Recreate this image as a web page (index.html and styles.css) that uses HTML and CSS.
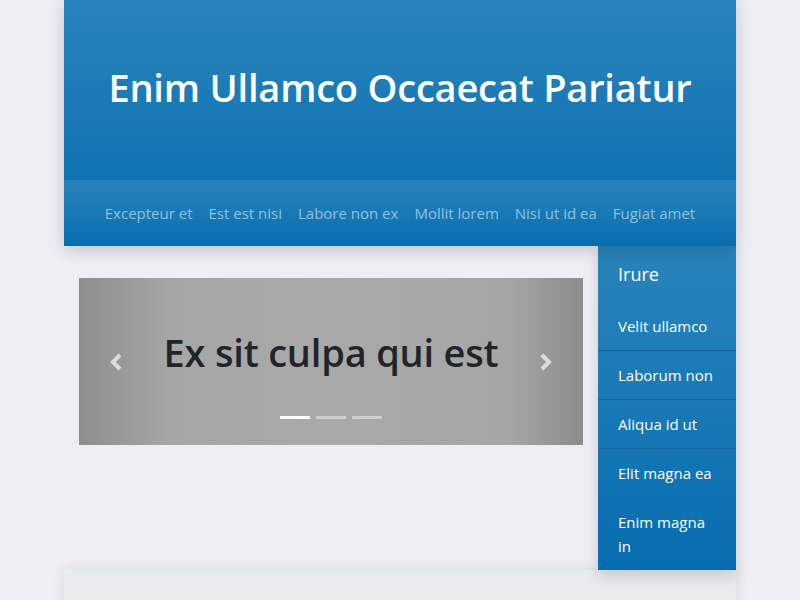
FILE: index.html
```html
<!DOCTYPE html>
<html>
<head>
<meta charset="utf-8">
<link rel="stylesheet" href="styles.css">
</head>
<body>
<div class="page">
  <header class="masthead">
    <div class="hero"><h1 class="title">Enim Ullamco Occaecat Pariatur</h1></div>
    <nav class="nav">
      <a>Excepteur et</a>
      <a>Est est nisi</a>
      <a>Labore non ex</a>
      <a>Mollit lorem</a>
      <a>Nisi ut id ea</a>
      <a>Fugiat amet</a>
    </nav>
  </header>
  <div class="body">
    <main class="main">
      <div class="carousel">
        <span class="ctrl prev"><svg width="16" height="20" viewBox="0 0 16 20"><path d="M11 3 L4 10 L11 17" fill="none" stroke="currentColor" stroke-width="4"/></svg></span>
        <h2 class="slide">Ex sit culpa qui est</h2>
        <span class="ctrl next"><svg width="16" height="20" viewBox="0 0 16 20"><path d="M5 3 L12 10 L5 17" fill="none" stroke="currentColor" stroke-width="4"/></svg></span>
        <div class="dots"><span class="dot on"></span><span class="dot"></span><span class="dot"></span></div>
      </div>
    </main>
    <aside class="side">
      <div class="side-head">Irure</div>
      <a class="side-item">Velit ullamco</a>
      <a class="side-item">Laborum non</a>
      <a class="side-item">Aliqua id ut</a>
      <a class="side-item">Elit magna ea</a>
      <a class="side-item">Enim magna in</a>
    </aside>
  </div>
  <footer class="foot"></footer>
</div>
</body>
</html>
```
FILE: styles.css
```css
html, body { margin: 0; padding: 0; }
body {
  background: #f0eef5;
  font-family: "Open Sans", "Noto Sans", sans-serif;
  overflow: hidden;
  height: 600px;
}
.page { width: 672px; margin: 0 auto; }
.masthead {
  background: linear-gradient(#2a84bb, #066db0);
  box-shadow: 0 4px 16px rgba(0,0,0,0.18);
  position: relative;
  z-index: 2;
}
.hero { height: 180px; display: flex; align-items: center; justify-content: center; }
.title {
  margin: 0 0 6px 0;
  color: #fff;
  font-size: 38px;
  font-weight: 600;
  letter-spacing: -0.2px;
}
.nav {
  height: 66px;
  background: linear-gradient(#2a84bb, #066db0);
  display: flex;
  justify-content: center;
  align-items: center;
  gap: 16px;
}
.nav a { color: #93c0de; font-size: 15px; }
.body { display: flex; align-items: flex-start; }
.main { width: 504px; padding: 32px 15px 0 15px; }
.carousel {
  height: 167px;
  background: linear-gradient(90deg, #8e8e8e 0%, #a6a6a6 18%, #a9a9a9 50%, #a6a6a6 85%, #8c8c8c 100%);
  display: flex;
  align-items: center;
  justify-content: center;
  position: relative;
}
.slide { margin: 0 0 20px 0; font-size: 38px; font-weight: 600; color: #212529; letter-spacing: -0.2px; }
.ctrl { position: absolute; top: 74px; color: #dcdcdc; }
.prev { left: 30px; }
.next { right: 30px; }
.dots { position: absolute; bottom: 26px; left: 0; right: 0; display: flex; justify-content: center; gap: 6px; }
.dot { width: 30px; height: 3px; background: #cfcfcf; }
.dot.on { background: #fff; }
.side {
  width: 138px;
  background: linear-gradient(#2a84bb, #066db0);
  box-shadow: 0 6px 14px rgba(0,0,0,0.15);
  position: relative;
  z-index: 1;
}
.side-head { height: 56px; padding: 0 20px; display: flex; align-items: center; color: #fff; font-size: 18px; }
.side-item {
  display: block;
  color: #fff;
  font-size: 15px;
  line-height: 24px;
  padding: 12px 12px 12px 20px;
  border-bottom: 1px solid #1a66a0;
}
.side-item:last-child { border-bottom: 0; padding-right: 20px; }
.foot {
  height: 100px;
  background: #e9ecef;
  box-shadow: 0 0 12px rgba(0,0,0,0.1);
}
```
